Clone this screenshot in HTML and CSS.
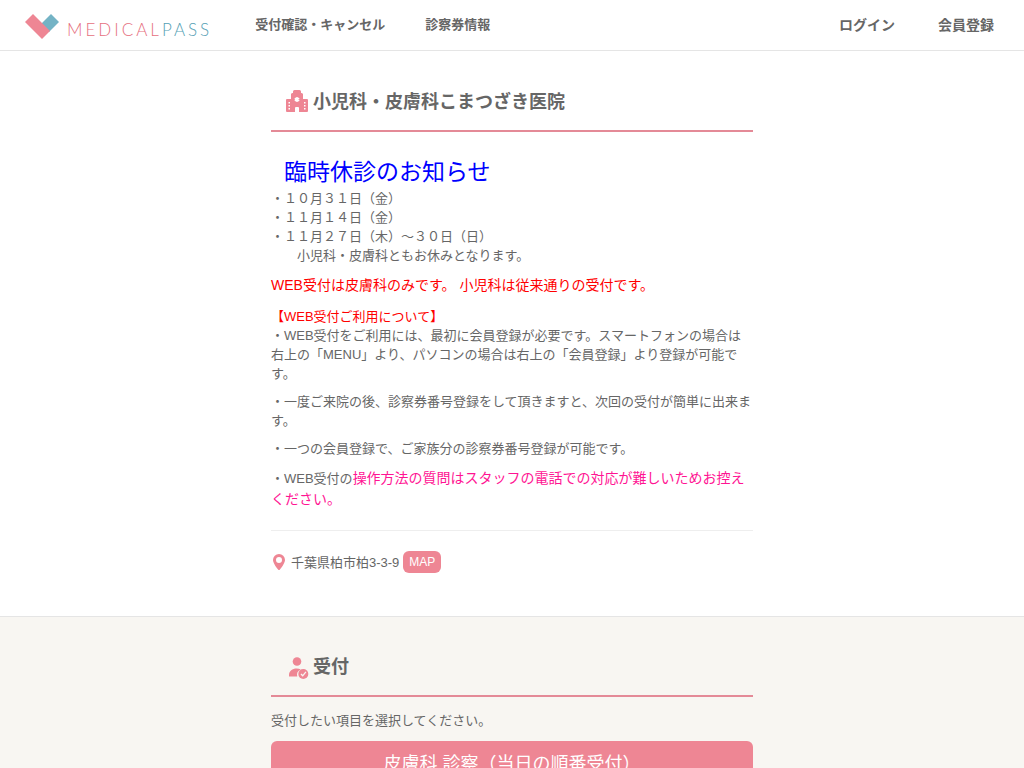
FILE: index.html
```html
<!DOCTYPE html>
<html lang="ja">
<head>
<meta charset="utf-8">
<meta name="viewport" content="width=device-width, initial-scale=1">
<title>小児科・皮膚科こまつざき医院 | MEDICALPASS</title>
<link rel="stylesheet" href="styles.css">
</head>
<body>
<header class="site-header">
  <a class="brand" href="#">
    <svg class="brand-mark" viewBox="0 0 34 26" aria-hidden="true">
      <path fill="#74b3c5" d="M26 0 34 8 24 18 16 10Z"/>
      <path fill="#ee8694" d="M8 0 25 17 17 25 0 8Z"/>
    </svg>
    <span class="brand-name">MEDICAL<span class="brand-accent">PASS</span></span>
  </a>
  <nav class="main-nav">
    <a href="#">受付確認・キャンセル</a>
    <a href="#">診察券情報</a>
  </nav>
  <nav class="account-nav">
    <a href="#">ログイン</a>
    <a href="#">会員登録</a>
  </nav>
</header>
<main>
  <section class="clinic">
    <div class="container">
      <h1 class="section-title">
        <svg class="title-icon" viewBox="0 0 24 24" aria-hidden="true">
          <path fill="#ee8694" d="M6 4a2 2 0 0 1 2-1V1.500A1.500 1.500 0 0 1 9.500 0h5A1.500 1.500 0 0 1 16 1.500V3a2 2 0 0 1 2 1V9h4a1 1 0 0 1 1 1v11a1 1 0 0 1-1 1h-8v-4a1 1 0 0 0-1-1h-2a1 1 0 0 0-1 1v4H2a1 1 0 0 1-1-1V10a1 1 0 0 1 1-1h4Z"/>
          <path fill="none" stroke="#fff" stroke-width="1.600" d="M12 7v5M9.800 8.300l4.400 2.400M14.200 8.300l-4.400 2.400"/>
          <path fill="#fff" d="M3.500 12H5v1.500H3.500ZM3.500 15H5v1.500H3.500ZM3.500 18H5v1.500H3.500ZM19 12h1.500v1.500H19ZM19 15h1.500v1.500H19ZM19 18h1.500v1.500H19Z"/>
        </svg>
        小児科・皮膚科こまつざき医院
      </h1>
      <div class="notice">
        <p>　<span class="notice-title">臨時休診のお知らせ</span><br>・１０月３１日（金）<br>・１１月１４日（金）<br>・１１月２７日（木）～３０日（日）<br>　　小児科・皮膚科ともお休みとなります。</p>
        <p class="alert lead">WEB受付は皮膚科のみです。 小児科は従来通りの受付です。</p>
        <p><span class="alert">【WEB受付ご利用について】</span><br>・WEB受付をご利用には、最初に会員登録が必要です。スマートフォンの場合は右上の「MENU」より、パソコンの場合は右上の「会員登録」より登録が可能です。</p>
        <p>・一度ご来院の後、診察券番号登録をして頂きますと、次回の受付が簡単に出来ます。</p>
        <p>・一つの会員登録で、ご家族分の診察券番号登録が可能です。</p>
        <p class="support">・WEB受付の<span class="support-note">操作方法の質問はスタッフの電話での対応が難しいためお控えください。</span></p>
      </div>
      <div class="address">
        <svg class="pin" viewBox="0 0 12 16" aria-hidden="true">
          <path fill="#ee8694" fill-rule="evenodd" d="M6 0a6 6 0 0 1 6 6c0 2.500-2.500 6.500-5.300 9.700a1 1 0 0 1-1.400 0C2.500 12.500 0 8.500 0 6a6 6 0 0 1 6-6Zm0 3a3 3 0 1 0 0 6 3 3 0 0 0 0-6Z"/>
        </svg>
        <span>千葉県柏市柏3-3-9</span>
        <a class="map-link" href="#">MAP</a>
      </div>
    </div>
  </section>
  <section class="reception">
    <div class="container">
      <h2 class="section-title">
        <svg class="title-icon" viewBox="0 0 24 24" aria-hidden="true">
          <circle cx="12" cy="6.500" r="4.300" fill="#ee8694"/>
          <path fill="#ee8694" d="M4 21.500v-1.500c0-4 3.500-6.500 7.500-6.500 1.700 0 3.200.300 4.300.900A6 6 0 0 0 12.300 21.500Z"/>
          <circle cx="18.300" cy="19" r="5" fill="#ee8694"/>
          <path fill="none" stroke="#f8f6f2" stroke-width="1.300" d="m16 19 1.700 1.800 3.200-4"/>
        </svg>
        受付
      </h2>
      <p class="prompt">受付したい項目を選択してください。</p>
      <button class="reception-button" type="button">皮膚科 診察（当日の順番受付）</button>
    </div>
  </section>
</main>
</body>
</html>
```
FILE: styles.css
```css
* {
  box-sizing: border-box;
}

body {
  margin: 0;
  background: #fff;
  color: #666;
  font-family: "Liberation Sans", "Noto Sans CJK JP", sans-serif;
  font-size: 13px;
  line-height: 19px;
}

a {
  color: inherit;
  text-decoration: none;
}

.site-header {
  display: flex;
  align-items: center;
  min-height: 51px;
  padding: 0 30px 0 25px;
  border-bottom: 1px solid #e5e5e5;
  font-weight: 700;
}

.brand {
  display: flex;
  align-items: center;
  gap: 8px;
  margin-right: 43px;
  padding-top: 4px;
}

.brand-mark {
  width: 34px;
  height: 26px;
}

.brand-name {
  padding-top: 4px;
  color: #e66f80;
  font-family: Lato, sans-serif;
  font-size: 17px;
  font-weight: 300;
  letter-spacing: 3px;
}

.brand-accent {
  color: #559fb5;
}

.main-nav {
  display: flex;
  gap: 40px;
  padding-bottom: 2px;
}

.account-nav {
  display: flex;
  gap: 43px;
  margin-left: auto;
  font-size: 14px;
}

.container {
  max-width: 482px;
  margin: 0 auto;
}

.clinic {
  padding: 30px 0 43px;
}

.section-title {
  display: flex;
  align-items: center;
  gap: 4px;
  margin: 0;
  padding: 9px 14px 16px;
  border-bottom: 2px solid #e48a97;
  font-size: 18px;
  line-height: 24px;
}

.title-icon {
  width: 24px;
  height: 24px;
}

.notice {
  padding: 24px 0 20px;
  border-bottom: 1px solid #eee;
}

.notice p {
  margin: 0 0 9px;
}

.notice p:last-child {
  margin-bottom: 0;
}

.notice-title {
  color: #00f;
  font-size: 23px;
  line-height: 33px;
}

.alert {
  color: #f00;
}

.lead {
  padding-bottom: 2px;
  font-size: 14px;
  line-height: 22px;
}

.support {
  padding-top: 1px;
  line-height: 20px;
}

.support-note {
  color: #ff1493;
  font-size: 14px;
}

.address {
  display: flex;
  align-items: center;
  gap: 4px;
  padding: 20px 0 0 2px;
}

.pin {
  width: 12px;
  height: 16px;
  margin-right: 2px;
}

.map-link {
  padding: 2px 6px;
  border-radius: 6px;
  background: #ee8694;
  color: #fff;
  font-size: 12px;
  line-height: 18px;
}

.reception {
  padding: 29px 0 40px;
  border-top: 1px solid #e5e5e5;
  background: #f8f6f2;
}

.prompt {
  margin: 14px 0 11px;
}

.reception-button {
  display: block;
  width: 100%;
  padding: 10px 12px;
  border: 0;
  border-radius: 6px;
  background: #ee8694;
  color: #fff;
  font-family: inherit;
  font-size: 18px;
  line-height: 26px;
}
```
